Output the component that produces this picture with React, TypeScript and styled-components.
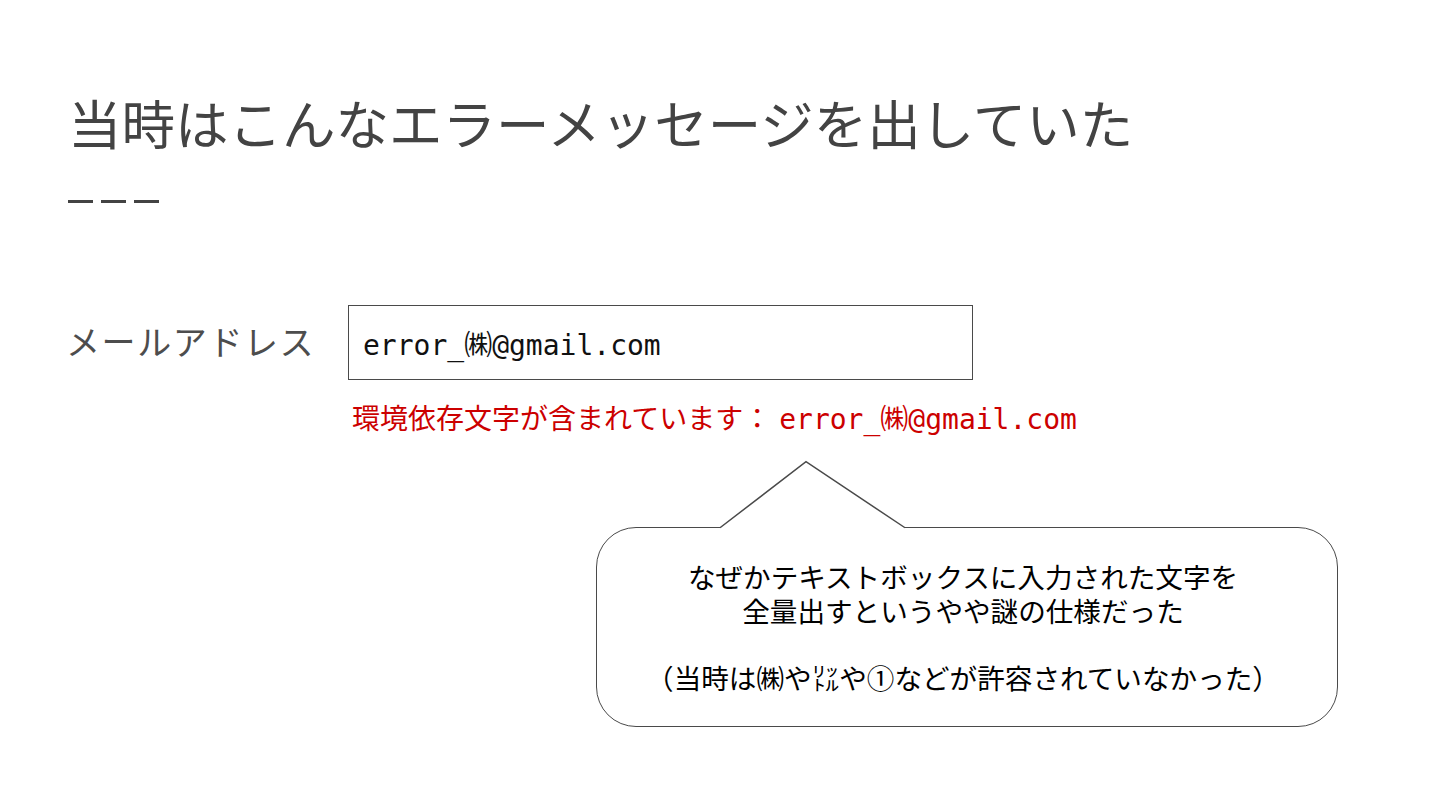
import styled, { createGlobalStyle } from 'styled-components';

const GlobalStyle = createGlobalStyle`
  html, body {
    margin: 0;
    padding: 0;
    background: #ffffff;
  }
  body {
    font-family: 'Noto Sans CJK JP', 'Noto Sans', sans-serif;
  }
`;

const JP = `'Noto Sans CJK JP', 'Noto Sans', sans-serif`;
const MONO = `'DejaVu Sans Mono', 'Noto Sans CJK JP', monospace`;

const Slide = styled.div`
  width: 1440px;
  height: 810px;
  box-sizing: border-box;
  padding: 90px 0 0 68px;
  display: flex;
  flex-direction: column;
  overflow: hidden;
`;

const Title = styled.h1`
  margin: 0;
  font-family: ${JP};
  font-size: 53.5px;
  line-height: 64px;
  font-weight: 400;
  color: #434343;
`;

const Divider = styled.div`
  display: flex;
  gap: 8px;
  margin-top: 46px;
`;

const Dash = styled.span`
  width: 25px;
  height: 3px;
  background: #434343;
`;

const FormRow = styled.div`
  display: flex;
  align-items: center;
  margin-top: 102px;
`;

const Label = styled.div`
  width: 282px;
  font-family: ${JP};
  font-size: 34px;
  line-height: 40px;
  letter-spacing: 1.6px;
  color: #4d4d4d;
  margin-left: -2px;
  margin-top: -4px;
`;

const InputBox = styled.div`
  width: 625px;
  height: 75px;
  box-sizing: border-box;
  border: 1.5px solid #4a4a4a;
  padding: 0 0 0 14px;
  display: flex;
  align-items: center;
  font-family: ${MONO};
  font-size: 28px;
  color: #111;
`;

const ErrorLine = styled.div`
  margin: 20px 0 0 284px;
  font-family: ${JP};
  font-size: 28px;
  line-height: 34px;
  color: #cc0000;
  white-space: nowrap;
`;

const Mono = styled.span`
  font-family: ${MONO};
  margin-left: 8px;
`;

const BubbleWrap = styled.div`
  position: relative;
  margin: 24px 0 0 528px;
  padding-top: 66px;
  width: 742px;
`;

const Bubble = styled.div`
  height: 200px;
  box-sizing: border-box;
  border: 1.5px solid #4a4a4a;
  border-radius: 40px;
  display: flex;
  flex-direction: column;
  align-items: center;
  justify-content: center;
  font-family: ${JP};
  font-size: 27.6px;
  line-height: 33.5px;
  color: #000;
  text-align: center;
  padding-right: 8px;
`;

const BubbleLine = styled.div<{ $gap?: boolean }>`
  margin-top: ${(p) => (p.$gap ? '33.5px' : '0')};
  white-space: nowrap;
`;

const Pointer = styled.svg`
  position: absolute;
  top: 0;
  left: 123px;
  width: 187px;
  height: 69px;
  overflow: visible;
`;

export default function App() {
  return (
    <>
      <GlobalStyle />
      <Slide>
        <Title>当時はこんなエラーメッセージを出していた</Title>
        <Divider>
          <Dash />
          <Dash />
          <Dash />
        </Divider>
        <FormRow>
          <Label>メールアドレス</Label>
          <InputBox>error_㈱@gmail.com</InputBox>
        </FormRow>
        <ErrorLine>
          環境依存文字が含まれています：<Mono>error_㈱@gmail.com</Mono>
        </ErrorLine>
        <BubbleWrap>
          <Bubble>
            <BubbleLine>なぜかテキストボックスに入力された文字を</BubbleLine>
            <BubbleLine>全量出すというやや謎の仕様だった</BubbleLine>
            <BubbleLine $gap>（当時は㈱や㍑や①などが許容されていなかった）</BubbleLine>
          </Bubble>
          <Pointer viewBox="0 0 187 69">
            <rect x="1" y="65" width="185" height="4" fill="#ffffff" />
            <polygon points="1,66.75 87,0.75 186,66.75" fill="#ffffff" />
            <polyline
              points="1,66.75 87,0.75 186,66.75"
              fill="none"
              stroke="#4a4a4a"
              strokeWidth="1.5"
            />
          </Pointer>
        </BubbleWrap>
      </Slide>
    </>
  );
}
